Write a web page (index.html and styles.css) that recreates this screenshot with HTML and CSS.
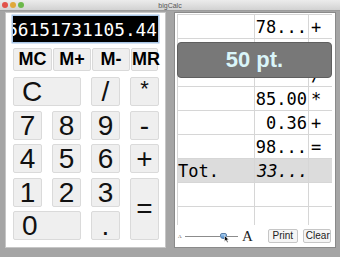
FILE: index.html
```html
<!DOCTYPE html>
<html>
<head>
<meta charset="utf-8">
<link rel="stylesheet" href="styles.css">
</head>
<body>
<div class="titlebar">
  <div class="lights"><i class="light red"></i><i class="light yellow"></i><i class="light green"></i></div>
  <div class="title">bigCalc</div>
  <div></div>
</div>
<div class="main">
  <div class="panel left">
    <div class="display"><span>56151731105.44</span></div>
    <div class="mem">
      <button class="mbtn w39">MC</button>
      <button class="mbtn w38">M+</button>
      <button class="mbtn w38">M-</button>
      <button class="mbtn w27">MR</button>
    </div>
    <div class="keys">
      <button class="key wide">C</button>
      <button class="key">/</button>
      <button class="key star">*</button>
      <button class="key">7</button>
      <button class="key">8</button>
      <button class="key">9</button>
      <button class="key">-</button>
      <button class="key">4</button>
      <button class="key">5</button>
      <button class="key">6</button>
      <button class="key">+</button>
      <button class="key">1</button>
      <button class="key">2</button>
      <button class="key">3</button>
      <button class="key tall">=</button>
      <button class="key wide">0</button>
      <button class="key">.</button>
    </div>
  </div>
  <div class="panel right">
    <div class="tape">
      <table>
        <colgroup><col class="c1"><col class="c2"><col class="c3"></colgroup>
        <tr><td></td><td class="num">78...</td><td class="op">+</td></tr>
        <tr><td></td><td class="num">12.00</td><td class="op">-</td></tr>
        <tr><td></td><td class="num"></td><td class="op">/</td></tr>
        <tr><td></td><td class="num">85.00</td><td class="op">*</td></tr>
        <tr><td></td><td class="num">0.36</td><td class="op">+</td></tr>
        <tr><td></td><td class="num">98...</td><td class="op">=</td></tr>
        <tr class="tot"><td class="label">Tot.</td><td class="num it">33...</td><td class="op"></td></tr>
        <tr><td></td><td class="num"></td><td class="op"></td></tr>
        <tr><td></td><td class="num"></td><td class="op"></td></tr>
      </table>
      <div class="hud">50 pt.</div>
    </div>
    <div class="controls">
      <span class="a-small">A</span>
      <div class="slider">
        <span class="track t1"></span>
        <span class="knob"></span>
        <span class="track t2"></span>
        <svg class="cursor" width="6" height="8" viewBox="0 0 6 8"><path d="M0.5 0.5 L0.5 6.5 L2 5.2 L3.2 7.5 L4.2 7 L3 4.8 L5 4.8 Z" fill="#111" stroke="#fff" stroke-width="0.6"/></svg>
      </div>
      <span class="a-big">A</span>
      <button class="sbtn print">Print</button>
      <button class="sbtn clear">Clear</button>
    </div>
  </div>
</div>
</body>
</html>
```
FILE: styles.css
```css
* { box-sizing: border-box; }
html, body { margin: 0; padding: 0; }
body {
  width: 340px;
  height: 257px;
  overflow: hidden;
  background: #a5a5a5;
  font-family: "Liberation Sans", Arial, sans-serif;
}
.titlebar {
  height: 11px;
  display: grid;
  grid-template-columns: 1fr auto 1fr;
  align-items: center;
  background: linear-gradient(#ececec, #d2d2d2);
  border-bottom: 1px solid #9c9c9c;
}
.lights { display: flex; gap: 2px; padding-left: 2px; }
.light { display: block; width: 6px; height: 6px; border-radius: 50%; }
.red { background: #e2524a; }
.yellow { background: #e0a83a; }
.green { background: #6cb84a; }
.title { font-size: 7px; color: #555; }
.main {
  display: flex;
  gap: 8px;
  padding: 1px 0 0 5px;
}
.panel {
  height: 236px;
  background: #fff;
}
.left {
  width: 161px;
  border: 1px solid #c6c6c6;
  padding: 3px 7px 0 7px;
}
.display {
  width: 145px;
  height: 26px;
  background: #000;
  color: #fff;
  display: flex;
  justify-content: flex-end;
  align-items: center;
  overflow: hidden;
  padding-right: 1px;
  box-shadow: 0 0 0 1.5px #a9c6e6;
  font-family: "DejaVu Sans Mono", monospace;
  font-size: 17.8px;
  white-space: nowrap;
}
.display span { flex: none; }
.mem {
  margin-top: 6px;
  display: flex;
  gap: 1px;
  height: 23px;
}
.mbtn {
  height: 23px;
  padding: 0;
  margin: 0;
  background: #efefef;
  border: 1px solid #d9d9d9;
  border-radius: 2px;
  font-family: "Liberation Sans", Arial, sans-serif;
  font-weight: bold;
  font-size: 18px;
  color: #000;
  line-height: 21px;
}
.w39 { width: 39px; }
.w38 { width: 38px; }
.w27 { width: 27px; }
.keys {
  margin-top: 6px;
  display: grid;
  grid-template-columns: repeat(4, 29px);
  grid-template-rows: repeat(5, 29px);
  column-gap: 10px;
  row-gap: 4.5px;
}
.key {
  margin: 0;
  padding: 0;
  background: #efefef;
  border: 1px solid #dadada;
  border-radius: 2px;
  font-family: "Liberation Sans", Arial, sans-serif;
  font-size: 28px;
  color: #111;
  line-height: 27px;
  text-align: center;
}
.key.wide {
  grid-column: span 2;
  text-align: left;
  padding-left: 8px;
}
.key.tall { grid-row: span 2; }
.key.star { font-size: 22px; line-height: 22px; align-self: stretch; padding-bottom: 6px; }
.right {
  width: 162px;
  border: 1px solid #8a8a8a;
  padding: 1px 3px 0 2px;
}
.tape {
  position: relative;
  height: 211px;
  overflow: hidden;
}
table {
  width: 155px;
  border-collapse: collapse;
  table-layout: fixed;
  font-family: "DejaVu Sans Mono", monospace;
  font-size: 17px;
  color: #000;
}
col.c1 { width: 77px; }
col.c2 { width: 54px; }
col.c3 { width: 24px; }
tr { height: 24px; }
td {
  border: 1px solid #d6d6d6;
  padding: 0;
  line-height: 20px;
  white-space: nowrap;
  overflow: hidden;
}
td.num { text-align: right; padding-right: 1px; }
td.op { padding-left: 2px; }
td.label { padding-left: 0; }
td.it { font-style: italic; text-align: left; padding-left: 2px; }
tr.tot td { background: #dcdcdc; }
.hud {
  position: absolute;
  left: 0;
  top: 28px;
  width: 155px;
  height: 36px;
  background: #787878;
  border: 1px solid #5f5f5f;
  border-radius: 4px;
  color: #daf5f9;
  font-weight: bold;
  font-size: 22px;
  line-height: 34px;
  text-align: center;
}
.controls {
  height: 22px;
  display: flex;
  align-items: center;
  padding-left: 1px;
}
.a-small { font-size: 5px; color: #444; width: 3px; margin-right: 4px; font-family: "Liberation Serif", serif; }
.slider { position: relative; display: flex; align-items: center; }
.track { display: block; height: 1px; background: #8c8c8c; }
.t1 { width: 35px; }
.t2 { width: 11px; }
.knob {
  display: block;
  width: 7px;
  height: 6px;
  border-radius: 2px 2px 3px 3px;
  background: linear-gradient(#a8cdf0, #4f8fd0);
  border: 1px solid #5a7fa8;
}
.cursor { position: absolute; left: 39px; top: 2px; }
.a-big {
  font-family: "Liberation Serif", serif;
  font-size: 15px;
  color: #222;
  margin-left: 4px;
  margin-right: 15px;
}
.sbtn {
  margin: 0;
  height: 14px;
  padding: 0 2px;
  background: #f5f5f5;
  border: 1px solid #c6c6c6;
  border-radius: 2px;
  font-family: "Liberation Sans", Arial, sans-serif;
  font-size: 10px;
  line-height: 12px;
  color: #222;
}
.print { width: 30px; margin-right: 5px; }
.clear { width: 28px; }
```
